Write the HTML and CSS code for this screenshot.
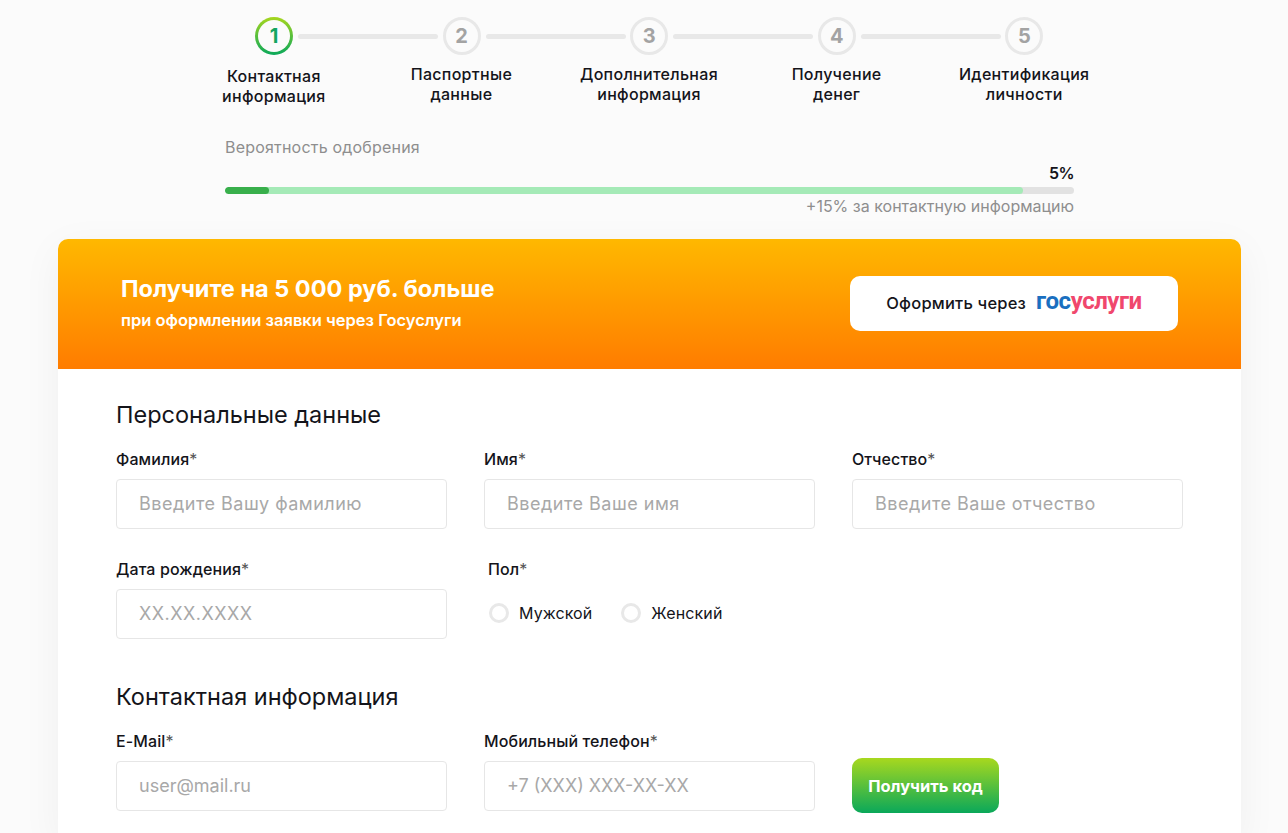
FILE: index.html
```html
<!DOCTYPE html>
<html lang="ru">
<head>
<meta charset="utf-8">
<title>Заявка</title>
<link rel="stylesheet" href="styles.css">
</head>
<body>
<div class="page">
  <div class="steps-line">
    <span class="circle active"><span class="num">1</span></span><span class="line"></span>
    <span class="circle"><span>2</span></span><span class="line"></span>
    <span class="circle"><span>3</span></span><span class="line"></span>
    <span class="circle"><span>4</span></span><span class="line"></span>
    <span class="circle"><span>5</span></span>
  </div>
  <div class="steps-labels">
    <div class="step-label first">Контактная<br>информация</div>
    <div class="step-label">Паспортные<br>данные</div>
    <div class="step-label">Дополнительная<br>информация</div>
    <div class="step-label">Получение<br>денег</div>
    <div class="step-label">Идентификация<br>личности</div>
  </div>
  <div class="chance">
    <div class="chance-title">Вероятность одобрения</div>
    <div class="chance-value">5%</div>
    <div class="bar"><div class="bar-next"><div class="bar-now"></div></div></div>
    <div class="chance-note">+15% за контактную информацию</div>
  </div>
  <div class="card">
    <div class="promo">
      <div class="promo-text">
        <div class="promo-title">Получите на 5 000 руб. больше</div>
        <div class="promo-sub">при оформлении заявки через Госуслуги</div>
      </div>
      <a class="gos-btn">Оформить через <span class="gos-logo"><span class="gos-blue">гос</span><span class="gos-red">услуги</span></span></a>
    </div>
    <div class="form">
      <h2 class="section">Персональные данные</h2>
      <div class="row">
        <div class="field"><label class="label">Фамилия<i>*</i></label><input class="input ru" placeholder="Введите Вашу фамилию"></div>
        <div class="field"><label class="label">Имя<i>*</i></label><input class="input ru" placeholder="Введите Ваше имя"></div>
        <div class="field"><label class="label">Отчество<i>*</i></label><input class="input ru" placeholder="Введите Ваше отчество"></div>
      </div>
      <div class="row">
        <div class="field"><label class="label">Дата рождения<i>*</i></label><input class="input ru" placeholder="XX.XX.XXXX"></div>
        <div class="field">
          <label class="label gender-label">Пол<i>*</i></label>
          <div class="radios">
            <span class="radio"><span class="dot"></span>Мужской</span>
            <span class="radio"><span class="dot"></span>Женский</span>
          </div>
        </div>
      </div>
      <h2 class="section second">Контактная информация</h2>
      <div class="row">
        <div class="field"><label class="label">E-Mail<i>*</i></label><input class="input" placeholder="user@mail.ru"></div>
        <div class="field"><label class="label">Мобильный телефон<i>*</i></label><input class="input" placeholder="+7 (XXX) XXX-XX-XX"></div>
        <div class="field code"><button class="code-btn">Получить код</button></div>
      </div>
    </div>
  </div>
</div>
</body>
</html>
```
FILE: styles.css
```css
* { box-sizing: border-box; }
html, body { margin: 0; height: 833px; overflow: hidden; background: #fbfbfb; }
body { font-family: "Inter", "Open Sans", sans-serif; color: #14141a; }
.page { padding-top: 17px; }

.steps-line { display: flex; align-items: center; margin-left: 255px; width: 788px; height: 38px; }
.circle { flex: none; width: 38px; height: 38px; border: 3px solid #e8e8e8; border-radius: 50%; display: flex; align-items: center; justify-content: center; font: 700 20px/1 "Inter", sans-serif; color: #a3a3a3; }
.circle.active { border: 0; background: linear-gradient(#a6d61e, #0aa85a); padding: 3px; }
.circle.active .num { width: 100%; height: 100%; border-radius: 50%; background: #fbfbfb; color: #13a561; display: flex; align-items: center; justify-content: center; }
.line { flex: none; width: 140px; height: 5px; margin: 1px 4.6px 0 5px; border-radius: 3px; background: #e8e8e8; }

.steps-labels { display: flex; margin-left: 180px; width: 938px; margin-top: 9px; }
.step-label { flex: 1 1 0; text-align: center; font-size: 16px; line-height: 20px; font-weight: 500; letter-spacing: .3px; }
.step-label.first { padding-top: 2px; }

.chance { margin: 31px 0 0 225px; width: 849px; }
.chance-title { font-size: 16px; line-height: 20px; letter-spacing: .2px; color: #8e8e8e; }
.chance-value { margin-top: 6px; text-align: right; font-size: 16px; line-height: 20px; font-weight: 600; letter-spacing: -.6px; }
.bar { margin-top: 4px; height: 7px; border-radius: 4px; background: #e2e2e2; overflow: hidden; }
.bar-next { width: 798px; height: 100%; border-radius: 4px; background: #a5eab7; }
.bar-now { width: 44px; height: 100%; border-radius: 4px; background: #38af4b; }
.chance-note { text-align: right; font-size: 16px; line-height: 25px; color: #8e8e8e; }

.card { margin: 20px 0 0 58px; width: 1183px; height: 600px; background: #fff; border-radius: 10px 10px 0 0; box-shadow: 0 10px 40px rgba(0, 0, 0, .05); }
.promo { height: 130px; padding: 0 63px; display: flex; align-items: center; justify-content: space-between; border-radius: 10px 10px 0 0; background: linear-gradient(#ffb800, #ff7c00); color: #fff; }
.promo-text { margin-bottom: 5px; }
.promo-title { font-size: 23.5px; line-height: 30px; font-weight: 700; }
.promo-sub { margin-top: 6px; font-size: 16.5px; line-height: 20px; font-weight: 600; }
.gos-btn { flex: none; width: 328px; height: 55px; display: flex; align-items: center; justify-content: center; gap: 10px; margin-top: -2px; background: #fff; border-radius: 10px; color: #14141a; font-size: 16.5px; font-weight: 500; letter-spacing: .2px; white-space: nowrap; }
.gos-logo { font: 700 24px/1 "Roboto", sans-serif; letter-spacing: -.45px; margin-top: -4px; }
.gos-blue { color: #1a6fc0; }
.gos-red { color: #f0476d; }

.form { padding: 31px 58px 0; }
.section { margin: 0; font-size: 23.5px; line-height: 30px; font-weight: 400; }
.section.second { margin-top: 43px; }
.row { display: flex; gap: 37px; margin-top: 19px; }
.row + .row { margin-top: 30px; }
.field { width: 331px; display: flex; flex-direction: column; }
.label { font-size: 16px; line-height: 20px; font-weight: 500; margin: 0 0 10px; height: 20px; letter-spacing: .1px; }
.label i { font-style: normal; font-weight: 400; color: #555; }
.gender-label { padding-left: 4px; }
.input { width: 331px; height: 50px; padding: 0 22px 2px; border: 1px solid #e6e6e6; border-radius: 4px; background: #fff; font: 400 18px "Inter", sans-serif; outline: 0; }
.input.ru { letter-spacing: .5px; }
.input::placeholder { color: #a8a8a8; opacity: 1; }
.radios { display: flex; height: 48px; align-items: center; gap: 29px; padding-left: 5px; font-size: 16px; letter-spacing: .1px; }
.radio { display: flex; align-items: center; gap: 10px; }
.dot { width: 20px; height: 20px; border: 3px solid #e8e8e8; border-radius: 50%; }
.code { width: 147px; }
.code-btn { width: 147px; height: 55px; margin-top: 27px; border: 0; border-radius: 10px; background: linear-gradient(#a8d81e, #0aa85a); color: #fff; font: 700 16.5px "Inter", sans-serif; }
```
